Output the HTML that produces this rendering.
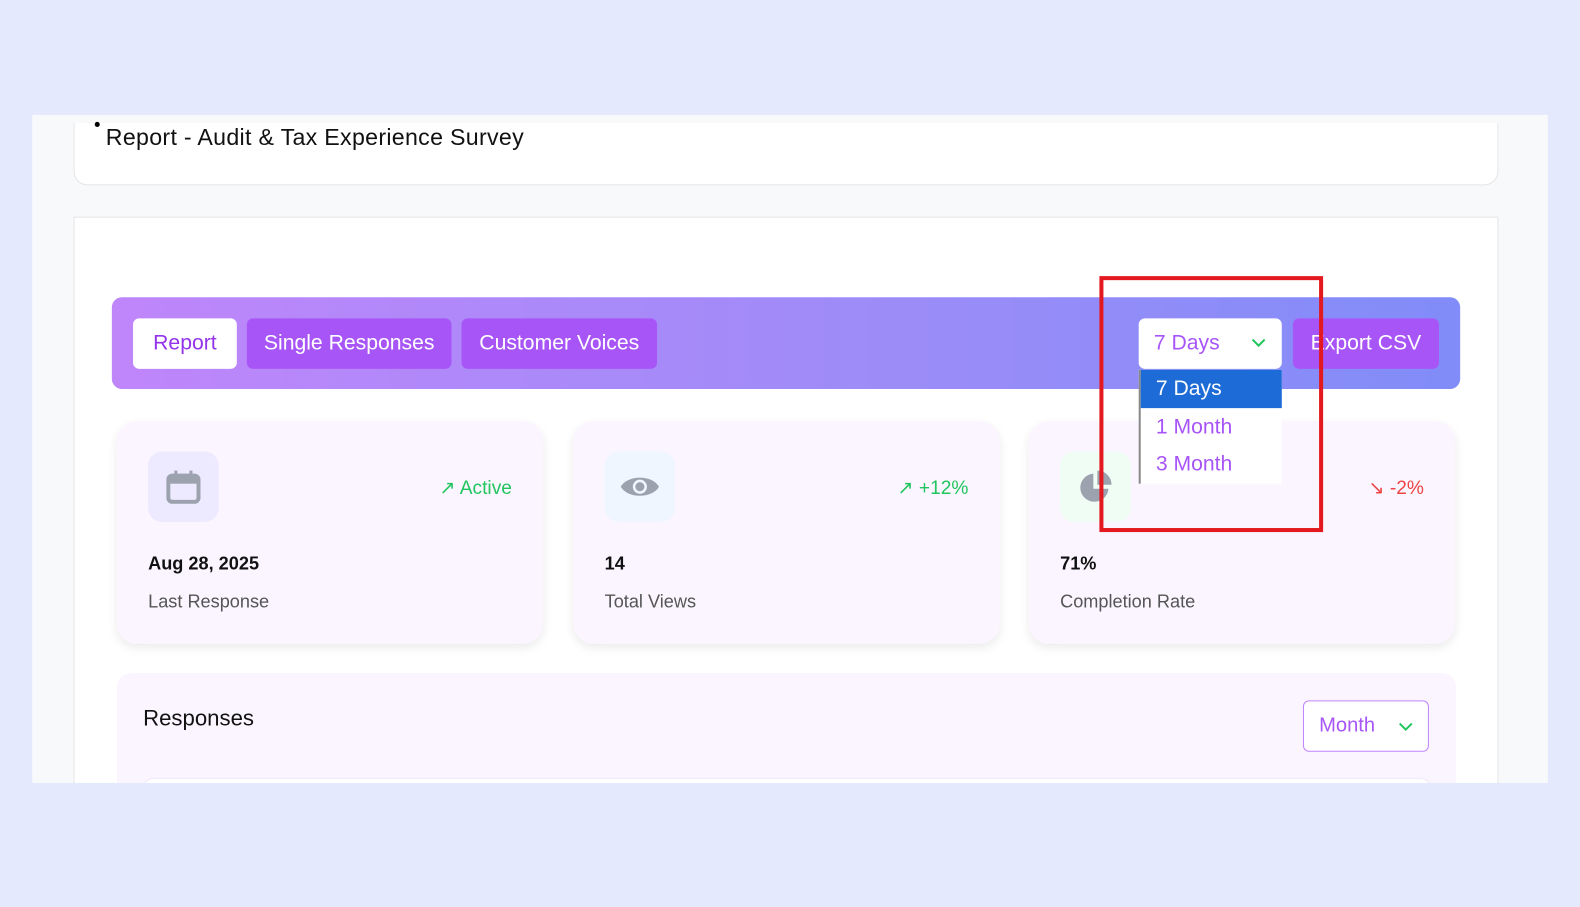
<!DOCTYPE html>
<html><head><meta charset="utf-8"><style>
*{box-sizing:border-box;margin:0;padding:0}
body{width:1580px;height:900px;background:#e5e9fe;font-family:"Liberation Sans",sans-serif;position:relative;overflow:hidden}
.wrap{position:absolute;left:0;top:0;width:1580px;height:900px;transform:scale(1.0077);transform-origin:0 0}
.abs{position:absolute}
.shot{left:32px;top:114px;width:1504px;height:663px;background:#f8f9fb;overflow:hidden}
.title{left:41px;top:8px;width:1414px;height:62px;background:#fff;border:1px solid #e4e4e7;border-top:none;border-radius:0 0 14px 14px}
.title span{position:absolute;left:31px;top:1px;font-size:23px;color:#111;letter-spacing:.3px}
.main{left:41px;top:101px;width:1414px;height:600px;background:#fff;border:1px solid #e4e4e7}
.bar{left:79px;top:181px;width:1338px;height:91px;border-radius:10px;background:linear-gradient(90deg,#bf86fa,#9b8cf8 60%,#818cf8)}
.btn{position:absolute;top:21px;height:50px;border-radius:6px;font-size:21px;line-height:50px;text-align:center;color:#fff;background:#a855f7}
.card{width:423px;height:221px;top:304px;background:#faf5ff;border-radius:20px;box-shadow:0 4px 10px rgba(0,0,0,.08)}
.ib{position:absolute;left:31px;top:30px;width:70px;height:70px;border-radius:14px}
.val{position:absolute;left:31px;top:131px;font-size:18px;font-weight:bold;color:#111}
.lab{position:absolute;left:31px;top:169px;font-size:18px;color:#555}
.tr{position:absolute;right:31px;top:55px;font-size:19px;color:#22c55e}
</style></head><body><div class="wrap">
<div class="abs shot">
 <div class="abs title"><span>Report - Audit &amp; Tax Experience Survey</span></div>
 <div class="abs" style="left:62px;top:7px;width:5px;height:5px;border-radius:50%;background:#000"></div>
 <div class="abs main"></div>
 <div class="abs bar">
  <div class="btn" style="left:21px;width:103px;background:#fff;color:#9333ea">Report</div>
  <div class="btn" style="left:134px;width:203px">Single Responses</div>
  <div class="btn" style="left:347px;width:194px">Customer Voices</div>
  <div class="btn" style="left:1172px;width:145px">Export CSV</div>
  <div class="btn" style="left:1019px;width:142px;background:#fff;color:#a855f7;text-align:left;padding-left:15px">7 Days
   <svg style="position:absolute;right:16px;top:19px" width="14" height="10" viewBox="0 0 14 10"><path d="M1 2l6 6 6-6" fill="none" stroke="#22c55e" stroke-width="2"/></svg></div>
 </div>
 <div class="abs card" style="left:84px">
  <div class="ib" style="background:#ede9fe"><svg style="position:absolute;left:18px;top:18px" width="34" height="34" viewBox="0 0 34 34"><rect x="2" y="6" width="30" height="26" rx="4" fill="none" stroke="#9ca3af" stroke-width="4"/><rect x="2" y="6" width="30" height="8" fill="#9ca3af"/><rect x="8" y="1" width="3" height="7" fill="#9ca3af"/><rect x="23" y="1" width="3" height="7" fill="#9ca3af"/></svg></div>
  <div class="tr">↗ Active</div><div class="val">Aug 28, 2025</div><div class="lab">Last Response</div>
 </div>
 <div class="abs card" style="left:537px">
  <div class="ib" style="background:#eff6ff"><svg style="position:absolute;left:15px;top:22px" width="40" height="26" viewBox="0 0 40 26"><path d="M1 13C8 1 32 1 39 13 32 25 8 25 1 13z" fill="#9ca3af"/><circle cx="20" cy="13" r="7" fill="#eff6ff"/><circle cx="20" cy="13" r="4.5" fill="#9ca3af"/></svg></div>
  <div class="tr">↗ +12%</div><div class="val">14</div><div class="lab">Total Views</div>
 </div>
 <div class="abs card" style="left:989px">
  <div class="ib" style="background:#f0fdf4"><svg style="position:absolute;left:18px;top:18px" width="34" height="34" viewBox="0 0 34 34"><path d="M15 4A14 14 0 1 0 30 19H15z" fill="#9ca3af"/><path d="M19 1a14 14 0 0 1 14 14H19z" fill="#9ca3af"/></svg></div>
  <div class="tr" style="color:#ef4444">↘ -2%</div><div class="val">71%</div><div class="lab">Completion Rate</div>
 </div>
 <div class="abs" style="left:84px;top:554px;width:1329px;height:140px;background:#faf5ff;border-radius:14px">
  <div class="abs" style="left:26px;top:32px;font-size:22px;color:#111">Responses</div>
  <div class="abs" style="left:1177px;top:27px;width:125px;height:51px;border:1px solid #c084fc;border-radius:6px;background:#fff;color:#a855f7;font-size:20px;line-height:49px;padding-left:15px">Month
   <svg style="position:absolute;right:15px;top:20px" width="14" height="10" viewBox="0 0 14 10"><path d="M1 2l6 6 6-6" fill="none" stroke="#22c55e" stroke-width="2"/></svg></div>
  <div class="abs" style="left:26px;top:104px;width:1278px;height:60px;background:#fff;border:1px solid #f0e8fb;border-radius:10px"></div>
 </div>
 <div class="abs" style="left:1098px;top:253px;width:142px;height:113px;background:#fff;border-left:2px solid #888">
  <div style="height:38px;background:#1d6bd6;color:#fff;font-size:21px;line-height:38px;padding-left:15px">7 Days</div>
  <div style="height:37px;color:#a855f7;font-size:21px;line-height:37px;padding-left:15px">1 Month</div>
  <div style="height:37px;color:#a855f7;font-size:21px;line-height:37px;padding-left:15px">3 Month</div>
 </div>
</div>
<div class="abs" style="left:1091px;top:274px;width:222px;height:254px;border:4px solid #e3191f"></div>
</div></body></html>
